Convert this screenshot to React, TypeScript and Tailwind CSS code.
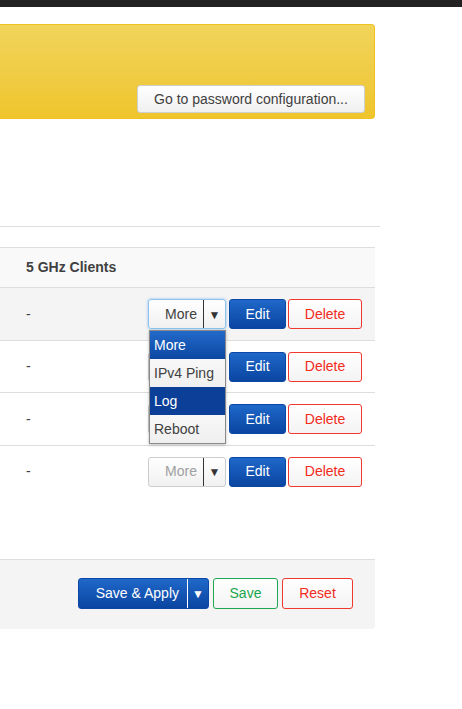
import React from 'react';

const FONT = { fontFamily: '"Liberation Sans", Arial, sans-serif' };

function MoreButton({ focused, disabled }: { focused?: boolean; disabled?: boolean }) {
    const border = focused
        ? 'border-[#8ec3ee] shadow-[0_0_3px_rgba(100,170,230,0.7)]'
        : 'border-[#cccccc]';
    return (
        <div
            className={`flex h-[30px] w-[78px] rounded-[3px] border bg-linear-to-b from-white to-[#f1f1f1] text-[14px] ${border}`}
        >
            <span
                className={`flex w-[54px] items-center justify-end pr-[6px] ${disabled ? 'text-[#a0a0a0]' : 'text-[#404040]'}`}
            >
                More
            </span>
            <span className="w-px bg-[#333]" />
            <span className="flex flex-1 items-center justify-center pt-[1px] text-[12px] text-[#333]">▼</span>
        </div>
    );
}

function RowButtons({ focused, disabled }: { focused?: boolean; disabled?: boolean }) {
    return (
        <div className="flex items-center pr-[13px]">
            <MoreButton focused={focused} disabled={disabled} />
            <button className="ml-[3px] h-[30px] w-[57px] rounded-[3px] border border-[#0b48a6] bg-linear-to-b from-[#1f68c9] to-[#0a45a1] text-[14px] text-white">
                Edit
            </button>
            <button className="ml-[2px] h-[30px] w-[74px] rounded-[3px] border border-[#f0382c] bg-linear-to-b from-white to-[#f3f3f3] text-[14px] text-[#f22b1d]">
                Delete
            </button>
        </div>
    );
}

function Row({ children, shaded, h }: { children?: React.ReactNode; shaded?: boolean; h: number }) {
    return (
        <div
            className={`relative flex items-center justify-between border-t border-[#dddddd] ${shaded ? 'bg-[#f4f4f4]' : 'bg-white'}`}
            style={{ height: h }}
        >
            <span className="pl-[26px] text-[14px] text-[#404040]">-</span>
            {children}
        </div>
    );
}

export default function App() {
    return (
        <div className="relative h-[709px] w-[462px] overflow-hidden bg-white text-[#404040]" style={FONT}>
            <div className="h-[7px] bg-[#222222]" />

            <div className="mt-[17px] flex h-[95px] w-[375px] items-end justify-end rounded-r-[4px] border border-l-0 border-[#efc21f] bg-linear-to-b from-[#f1d45a] to-[#efc52b] pb-[5px] pr-[9px]">
                <button className="h-[28px] w-[228px] rounded-[3px] border border-[#cfcfcf] bg-linear-to-b from-white to-[#f0f0f0] text-[14px] text-[#404040]">
                    Go to password configuration...
                </button>
            </div>

            <div className="mt-[107px] h-px w-[380px] bg-[#dddddd]" />

            <div className="mt-[20px] w-[375px]">
                <div className="flex h-[40px] items-center border-t border-[#dddddd] bg-[#f9f9f9] pl-[26px] text-[14px] font-bold">
                    5 GHz Clients
                </div>
                <Row shaded h={53}>
                    <RowButtons focused />
                    <div className="absolute left-[149px] top-[42px] z-10 w-[77px] border border-[#8a8a8a] bg-[#f4f4f4] text-[14px] shadow-[0_1px_3px_rgba(0,0,0,0.25)]">
                        <div className="flex h-[28px] items-center bg-linear-to-b from-[#2369c9] to-[#0c48a3] pl-[4px] text-white">More</div>
                        <div className="flex h-[28px] items-center bg-linear-to-b from-[#f8f8f8] to-[#efefef] pl-[4px]">IPv4 Ping</div>
                        <div className="flex h-[28px] items-center bg-[#0b3f98] pl-[4px] text-white">Log</div>
                        <div className="flex h-[28px] items-center bg-linear-to-b from-[#f8f8f8] to-[#efefef] pl-[4px]">Reboot</div>
                    </div>
                </Row>
                <Row h={52}>
                    <RowButtons />
                </Row>
                <Row h={53}>
                    <RowButtons />
                </Row>
                <Row h={52}>
                    <RowButtons disabled />
                </Row>
            </div>

            <div className="mt-[62px] flex h-[70px] w-[375px] justify-end rounded-br-[4px] border-t border-[#dddddd] bg-[#f4f4f4] pr-[22px] pt-[18px]">
                <div className="flex h-[31px] w-[131px] rounded-[3px] border border-[#0b48a6] bg-linear-to-b from-[#1f68c9] to-[#0a45a1] text-[14px] text-white">
                    <span className="flex w-[108px] items-center justify-end pr-[8px]">Save &amp; Apply</span>
                    <span className="w-px bg-white" />
                    <span className="flex flex-1 items-center justify-center pt-[1px] text-[12px]">▼</span>
                </div>
                <button className="ml-[4px] h-[31px] w-[65px] rounded-[3px] border border-[#1fa650] bg-linear-to-b from-white to-[#f3f3f3] text-[14px] text-[#18a64c]">
                    Save
                </button>
                <button className="ml-[4px] h-[31px] w-[71px] rounded-[3px] border border-[#f0382c] bg-linear-to-b from-white to-[#f3f3f3] text-[14px] text-[#f22b1d]">
                    Reset
                </button>
            </div>
        </div>
    );
}
